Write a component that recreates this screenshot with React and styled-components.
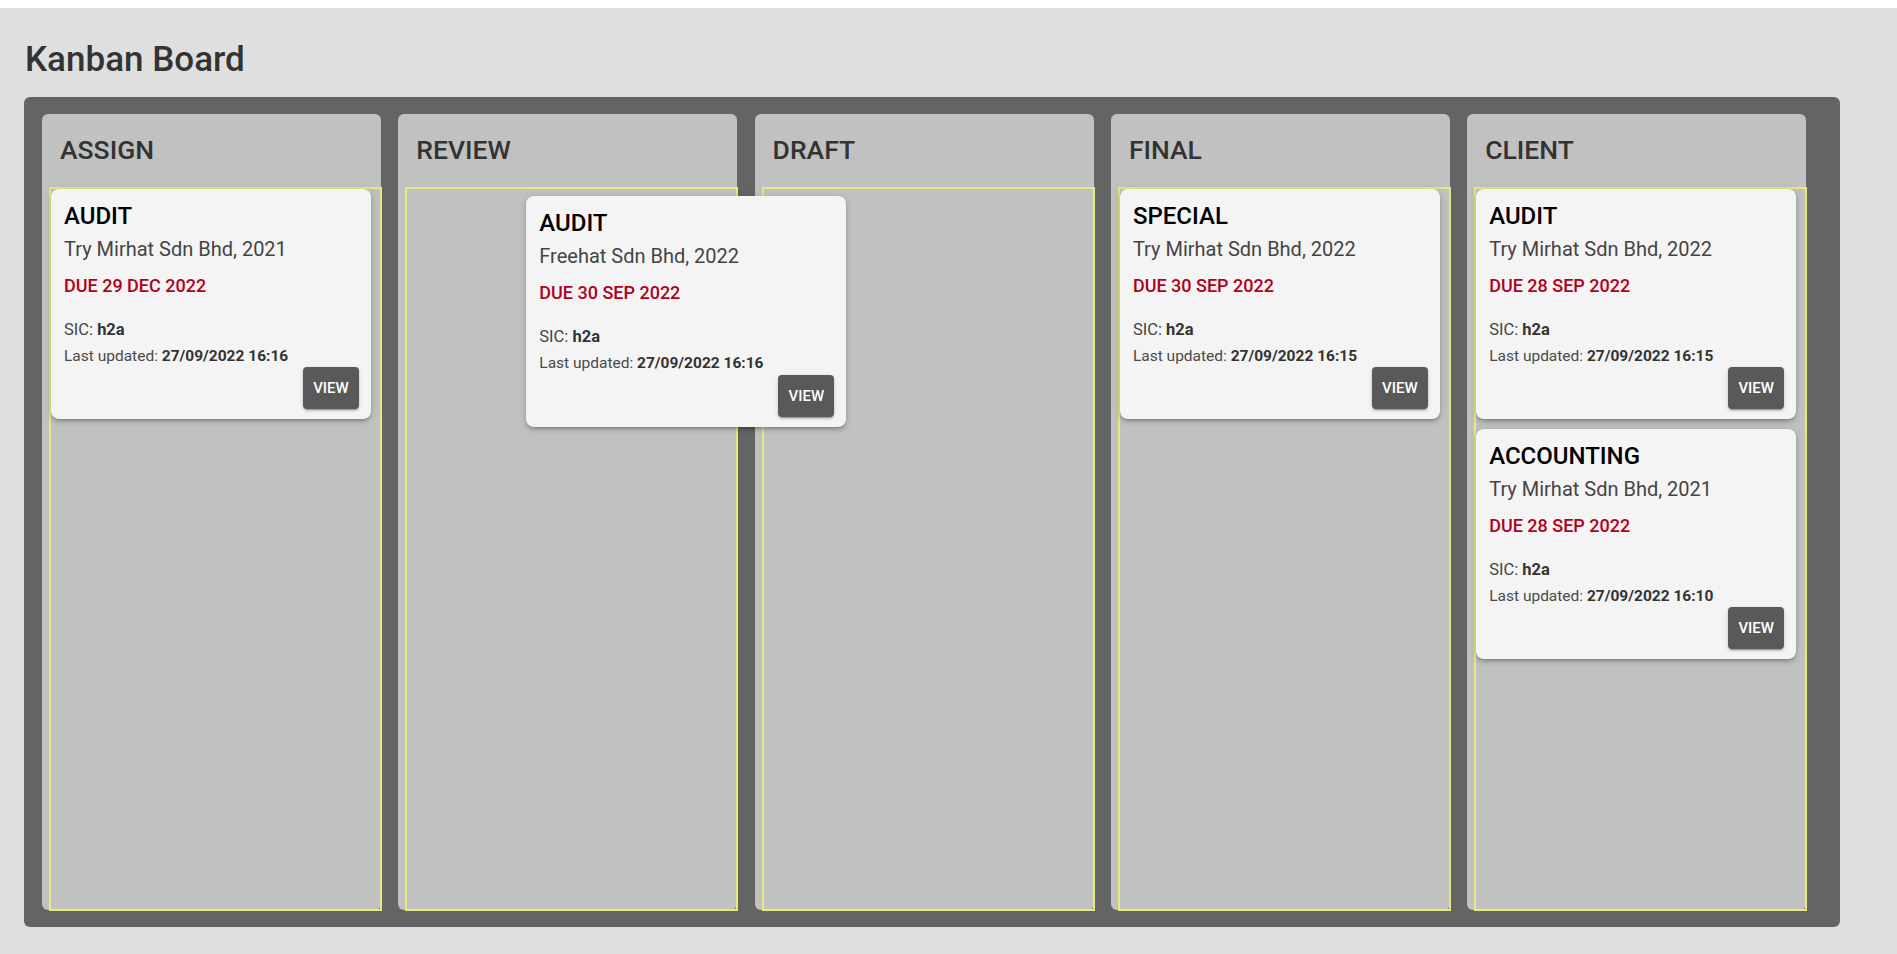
import React from "react";
import styled, { createGlobalStyle } from "styled-components";

const GlobalStyle = createGlobalStyle`
  html, body { margin: 0; padding: 0; }
  body {
    background: #dfdfdf;
    font-family: Roboto, "Liberation Sans", Arial, sans-serif;
    border-top: 8px solid #ffffff;
  }
  * { box-sizing: border-box; }
`;

const Page = styled.div`
  min-height: 946px;
  padding: 31px 24px 0 24px;
`;

const Title = styled.h1`
  margin: 0 0 16px 1px;
  font-size: 35px;
  line-height: 42px;
  font-weight: 500;
  color: #333333;
`;

const Board = styled.div`
  width: 1816px;
  background: #646464;
  border-radius: 6px;
  padding: 17px 18px;
  display: flex;
  gap: 17.3px;
`;

const Column = styled.section`
  width: 339px;
  height: 796px;
  flex: none;
  background: #c1c1c1;
  border-radius: 6px;
  display: flex;
  flex-direction: column;
`;

const ColumnTitle = styled.h2`
  margin: 0;
  padding: 21px 18px 22px 18px;
  font-size: 26.5px;
  line-height: 30px;
  font-weight: 500;
  color: #333333;
`;

const DropZone = styled.div`
  position: relative;
  flex: 1;
  width: 333px;
  margin: 0 -1px -1px 7px;
  border: 2px solid #e8e87c;
  display: flex;
  flex-direction: column;
  gap: 10px;
`;

const Card = styled.article`
  width: 320px;
  height: ${(p) => (p.$dragging ? 231 : 230)}px;
  background: #f4f4f4;
  border-radius: 8px;
  padding: 13px 12px 10px 13px;
  display: flex;
  flex-direction: column;
  box-shadow: 0 3px 3px -2px rgba(0, 0, 0, 0.2), 0 3px 4px 0 rgba(0, 0, 0, 0.14),
    0 1px 8px 0 rgba(0, 0, 0, 0.12);
  ${(p) =>
    p.$dragging &&
    `
    position: absolute;
    left: 119px;
    top: 7px;
    z-index: 10;
  `}
`;

const CardType = styled.div`
  font-size: 24px;
  line-height: 29px;
  font-weight: 500;
  color: #000000;
`;

const Company = styled.div`
  margin-top: 6px;
  font-size: 20px;
  line-height: 24px;
  color: #444444;
`;

const Due = styled.div`
  margin-top: 14px;
  font-size: 18px;
  line-height: 22px;
  font-weight: 500;
  color: #b00020;
`;

const Sic = styled.div`
  margin-top: 23px;
  font-size: 16.5px;
  line-height: 20px;
  color: #444444;
  b { font-weight: 700; color: #333333; }
`;

const Updated = styled.div`
  margin-top: 7px;
  font-size: 15.5px;
  line-height: 18px;
  color: #4a4a4a;
  b { font-weight: 700; color: #333333; }
`;

const Actions = styled.div`
  margin-top: auto;
  display: flex;
  justify-content: flex-end;
`;

const ViewButton = styled.button`
  width: 56px;
  height: 42px;
  border: none;
  border-radius: 4px;
  background: #595959;
  color: #ffffff;
  font-family: Roboto, "Liberation Sans", Arial, sans-serif;
  font-size: 15px;
  font-weight: 500;
  text-transform: uppercase;
  padding: 0;
  cursor: pointer;
  box-shadow: 0 3px 1px -2px rgba(0, 0, 0, 0.2), 0 2px 2px 0 rgba(0, 0, 0, 0.14),
    0 1px 5px 0 rgba(0, 0, 0, 0.12);
`;

const columns = [
  {
    title: "ASSIGN",
    cards: [
      {
        type: "AUDIT",
        company: "Try Mirhat Sdn Bhd, 2021",
        due: "DUE 29 DEC 2022",
        sic: "h2a",
        updated: "27/09/2022 16:16",
      },
    ],
  },
  {
    title: "REVIEW",
    cards: [
      {
        type: "AUDIT",
        company: "Freehat Sdn Bhd, 2022",
        due: "DUE 30 SEP 2022",
        sic: "h2a",
        updated: "27/09/2022 16:16",
        dragging: true,
      },
    ],
  },
  { title: "DRAFT", cards: [] },
  {
    title: "FINAL",
    cards: [
      {
        type: "SPECIAL",
        company: "Try Mirhat Sdn Bhd, 2022",
        due: "DUE 30 SEP 2022",
        sic: "h2a",
        updated: "27/09/2022 16:15",
      },
    ],
  },
  {
    title: "CLIENT",
    cards: [
      {
        type: "AUDIT",
        company: "Try Mirhat Sdn Bhd, 2022",
        due: "DUE 28 SEP 2022",
        sic: "h2a",
        updated: "27/09/2022 16:15",
      },
      {
        type: "ACCOUNTING",
        company: "Try Mirhat Sdn Bhd, 2021",
        due: "DUE 28 SEP 2022",
        sic: "h2a",
        updated: "27/09/2022 16:10",
      },
    ],
  },
];

function TaskCard({ card }) {
  return (
    <Card $dragging={card.dragging}>
      <CardType>{card.type}</CardType>
      <Company>{card.company}</Company>
      <Due>{card.due}</Due>
      <Sic>
        SIC: <b>{card.sic}</b>
      </Sic>
      <Updated>
        Last updated: <b>{card.updated}</b>
      </Updated>
      <Actions>
        <ViewButton>View</ViewButton>
      </Actions>
    </Card>
  );
}

export default function App() {
  return (
    <>
      <GlobalStyle />
      <Page>
        <Title>Kanban Board</Title>
        <Board>
          {columns.map((col) => (
            <Column key={col.title}>
              <ColumnTitle>{col.title}</ColumnTitle>
              <DropZone>
                {col.cards.map((card, i) => (
                  <TaskCard key={i} card={card} />
                ))}
              </DropZone>
            </Column>
          ))}
        </Board>
      </Page>
    </>
  );
}
